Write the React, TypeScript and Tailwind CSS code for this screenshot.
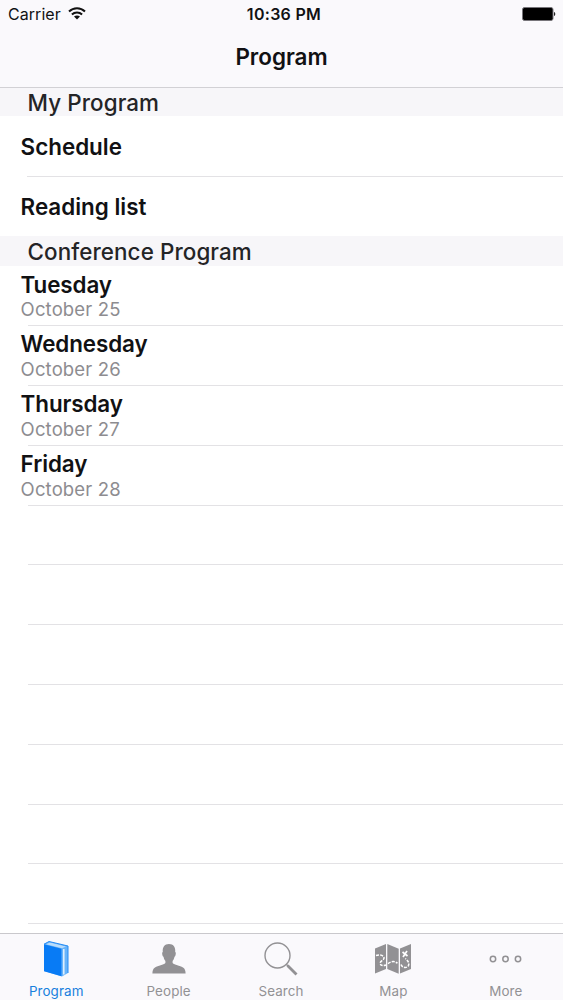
import React from "react";

interface Day {
  name: string;
  date: string;
}

interface TabProps {
  label: string;
  active?: boolean;
  children: React.ReactNode;
}

const days: Day[] = [
  { name: "Tuesday", date: "October 25" },
  { name: "Wednesday", date: "October 26" },
  { name: "Thursday", date: "October 27" },
  { name: "Friday", date: "October 28" },
];

const emptyRows = [0, 1, 2, 3, 4, 5, 6];

const StatusBar: React.FC = () => (
  <div className="grid h-7 grid-cols-3 items-center pr-[7px] pl-[8px] text-[16px] leading-7">
    <div className="flex items-center gap-[7px]">
      <span className="tracking-[0.05px]">Carrier</span>
      <svg className="-mt-px" width="18" height="13" viewBox="0 0 18 13" fill="none" stroke="#111" strokeWidth="2">
        <path d="M1 4.5C5.5 0.2 12.5 0.2 17 4.5" />
        <path d="M3.9 7.5C6.8 4.8 11.2 4.8 14.1 7.5" />
        <path d="M9 12.6L6 9.6C7.7 8.1 10.3 8.1 12 9.6Z" fill="#111" stroke="none" />
      </svg>
    </div>
    <span className="pl-[4px] text-center font-semibold tracking-[0.3px] whitespace-nowrap">10:36 PM</span>
    <svg className="justify-self-end" width="34" height="14" viewBox="0 0 34 14">
      <rect x="0.5" y="0.5" width="30.5" height="13" rx="2" fill="#000" stroke="#77757a" />
      <path d="M32 5C33.7 5.3 33.7 8.7 32 9Z" fill="#222" />
    </svg>
  </div>
);

const SectionHeader: React.FC<{ title: string }> = ({ title }) => (
  <h2 className="flex h-full items-center bg-[#f7f6f9] pt-[2px] pl-[27.5px] text-[22.4px] font-medium tracking-[0.1px] text-[#242426]">
    {title}
  </h2>
);

const Tab: React.FC<TabProps> = ({ label, active, children }) => (
  <button
    className={`flex flex-1 flex-col items-center pt-1.5 ${active ? "text-[#1880dd]" : "text-[#929194]"}`}
  >
    <span className="flex h-[38px] items-center">{children}</span>
    <span className="mt-[4px] text-[13.4px] leading-[18px] tracking-[0.1px]">{label}</span>
  </button>
);

const BookIcon: React.FC = () => (
  <svg width="28" height="38" viewBox="0 0 28 38">
    <path d="M2 4L7 1.5L26 6V33L20 36.5L2 31Z" fill="#68b4fa" />
    <path d="M4 4.2L8 2.4L24 6.4L20 8.3Z" fill="#b9dcfb" />
    <path d="M2 4.2L19.5 8.8V36.2L2 31.2Z" fill="#087bf5" />
    <path d="M21.8 9V34.5" stroke="#e3f1fd" strokeWidth="1.5" />
    <path d="M2 4.2L7 1.5L26 6V33" fill="none" stroke="#268cf5" strokeWidth="1" />
  </svg>
);

const PersonIcon: React.FC = () => (
  <svg width="34" height="30" viewBox="0 0 34 30" fill="#929194">
    <path d="M17 0C12.4 0 10.3 3.3 10.8 8C9.6 8 10.3 12.5 11.5 12.7C12 15 12.7 16.1 13.4 17V19C11.5 21 6.2 21.6 3 23.5C1 24.8 .5 26.7 .4 29.5H33.6C33.5 26.7 33 24.8 31 23.5C27.8 21.6 22.5 21 20.6 19V17C21.3 16.1 22 15 22.5 12.7C23.7 12.5 24.4 8 23.2 8C23.7 3.3 21.6 0 17 0Z" />
  </svg>
);

const SearchIcon: React.FC = () => (
  <svg width="34" height="34" viewBox="0 0 34 34" fill="none" stroke="#929194">
    <circle cx="13.5" cy="13.5" r="12.5" strokeWidth="1.4" />
    <path d="M22.3 22.3L24 24" strokeWidth="1.5" />
    <path d="M23.5 23.5L32.5 32.5" strokeWidth="2.8" />
  </svg>
);

const MapIcon: React.FC = () => (
  <svg width="36" height="30" viewBox="0 0 36 30">
    <path d="M0 4.5L11 0V25L0 29.5Z" fill="#929194" />
    <path d="M12.3 0L23.7 4.7V29.7L12.3 25Z" fill="#929194" />
    <path d="M25 4.5L36 0V25L25 29.5Z" fill="#929194" />
    <g fill="none" stroke="#fff" strokeWidth="1.5">
      <path d="M1 11.5C4 10.5 8.5 11 9 13.5C9.5 16.2 5 17 5.2 19.2C5.3 21.5 8 22.2 11 21" strokeDasharray="3 1.2" />
      <path d="M13 19.7C16 17.4 19 16.7 22.5 19.2M26 20.5C27 24 32 24.5 33.5 21.5C34.6 18.5 32.5 16.5 30.3 14.5" strokeDasharray="3 1.2" />
      <path d="M27.5 8L32.5 12M32 7L28 13" strokeWidth="1.7" />
    </g>
  </svg>
);

const MoreIcon: React.FC = () => (
  <svg width="34" height="8" viewBox="0 0 34 8" fill="none" stroke="#929194" strokeWidth="1.5">
    <circle cx="4" cy="4" r="2.7" />
    <circle cx="16.5" cy="4" r="2.7" />
    <circle cx="29" cy="4" r="2.7" />
  </svg>
);

const App: React.FC = () => (
  <div className="flex h-[1000px] w-[563px] flex-col overflow-hidden bg-white font-['Inter',sans-serif] text-[#111113]">
    <header className="h-[88px] shrink-0 border-b border-[#d2d1d5] bg-[#faf9fc]">
      <StatusBar />
      <h1 className="pt-[13px] text-center text-[22.4px] leading-8 font-semibold">Program</h1>
    </header>

    <main className="min-h-0 flex-1 overflow-hidden">
      <section>
        <div className="h-[28px]">
          <SectionHeader title="My Program" />
        </div>
        <div className="flex h-[60px] items-center pt-[2px] pl-[20.6px] text-[22.4px] font-semibold">Schedule</div>
        <div className="ml-[27px] h-px bg-[#e3e2e5]" />
        <div className="flex h-[59px] items-center pl-[20.6px] text-[22.4px] font-semibold">Reading list</div>
      </section>

      <section>
        <div className="h-[30.4px]">
          <SectionHeader title="Conference Program" />
        </div>
        {days.map((day) => (
          <div key={day.name} className="flex h-[59.8px] flex-col">
            <div className="flex-1 pt-[4.2px] pl-[20.6px]">
              <p className="text-[22.4px] leading-[27.8px] font-semibold tracking-[-0.1px]">{day.name}</p>
              <p className="text-[18.5px] leading-[23px] tracking-[0.15px] text-[#8d8c90]">{day.date}</p>
            </div>
            <div className="ml-[28px] h-px bg-[#e3e2e5]" />
          </div>
        ))}
        {emptyRows.map((row) => (
          <div key={row} className="flex h-[59.8px] items-end pl-[28px]">
            <div className="h-px w-full bg-[#e3e2e5]" />
          </div>
        ))}
      </section>
    </main>

    <nav className="flex h-[67px] shrink-0 border-t border-[#c9c8cc] bg-[#faf9fc] pr-px">
      <Tab label="Program" active>
        <BookIcon />
      </Tab>
      <Tab label="People">
        <PersonIcon />
      </Tab>
      <Tab label="Search">
        <SearchIcon />
      </Tab>
      <Tab label="Map">
        <MapIcon />
      </Tab>
      <Tab label="More">
        <MoreIcon />
      </Tab>
    </nav>
  </div>
);

export default App;
